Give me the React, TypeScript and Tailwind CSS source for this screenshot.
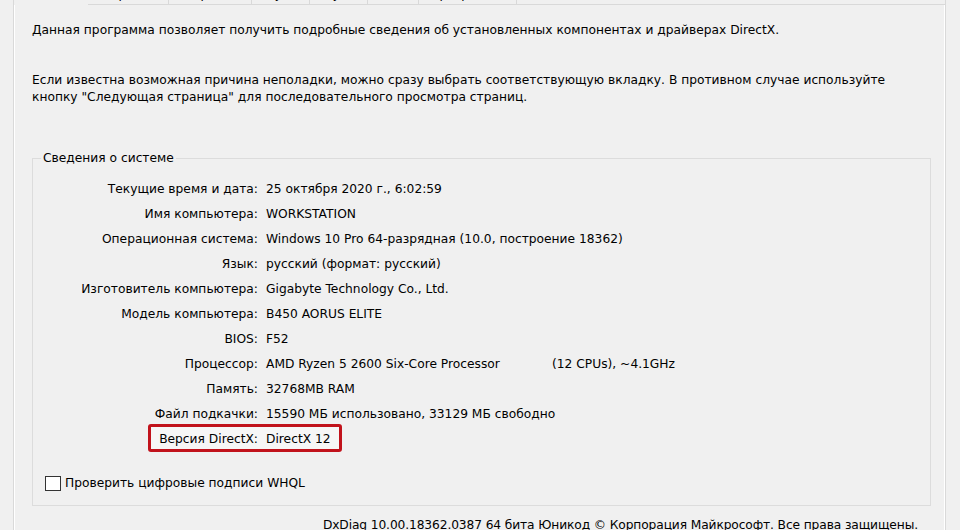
import React from "react";

const rows: [string, React.ReactNode][] = [
  ["Текущие время и дата:", "25 октября 2020 г., 6:02:59"],
  ["Имя компьютера:", "WORKSTATION"],
  ["Операционная система:", "Windows 10 Pro 64-разрядная (10.0, построение 18362)"],
  ["Язык:", "русский (формат: русский)"],
  ["Изготовитель компьютера:", "Gigabyte Technology Co., Ltd."],
  ["Модель компьютера:", "B450 AORUS ELITE"],
  ["BIOS:", "F52"],
  [
    "Процессор:",
    <span className="flex">
      <span className="w-[286px] shrink-0">AMD Ryzen 5 2600 Six-Core Processor</span>
      <span>(12 CPUs), ~4.1GHz</span>
    </span>,
  ],
  ["Память:", "32768MB RAM"],
  ["Файл подкачки:", "15590 МБ использовано, 33129 МБ свободно"],
];

const tabs: [string, string][] = [
  ["Экран 1", "w-[81px]"],
  ["Экран 2", "w-[83px]"],
  ["Звук 1", "w-[58px]"],
  ["Звук 2", "w-[58px]"],
  ["Ввод", "w-[51px]"],
  ["Программы", "w-[98px]"],
];

export default function App() {
  return (
    <div className="w-[960px] h-[530px] overflow-hidden bg-[#f0f0f0] text-black font-['DejaVu_Sans',sans-serif] text-[12.25px] leading-[17px]">
      {/* tab strip */}
      <div className="flex h-[5px] ml-[13px] w-[933px]">
        <div className="w-[75px] h-[5px] border-l border-[#d9d9d9]" />
        {tabs.map(([t, w]) => (
          <div
            key={t}
            className={`${w} h-[5px] flex items-end justify-center border-r border-b border-[#d9d9d9] bg-[#f0f0f0]`}
          >
            <span className="whitespace-nowrap mb-[1px]">{t}</span>
          </div>
        ))}
        <div className="flex-1 h-[5px] border-b border-r border-[#d9d9d9]" />
      </div>

      {/* tab page */}
      <div className="ml-[13px] w-[933px] h-[525px] border-l border-r border-[#d9d9d9] shadow-[inset_1px_0_0_#ffffff,inset_-1px_0_0_#ffffff] pl-[18px] pr-[14px] pt-[17px]">
        <p className="whitespace-nowrap">
          Данная программа позволяет получить подробные сведения об установленных компонентах и драйверах DirectX.
        </p>
        <p className="mt-[33px]">
          Если известна возможная причина неполадки, можно сразу выбрать соответствующую вкладку. В противном случае используйте
          <br />
          кнопку "Следующая страница" для последовательного просмотра страниц.
        </p>

        <fieldset className="mt-[44px] border border-[#dcdcdc] pt-[10px] pb-[13px]">
          <legend className="ml-[8px] px-[2px]">Сведения о системе</legend>
          <div className="flex flex-col">
            {rows.map(([label, value]) => (
              <div key={label} className="grid grid-cols-[225px_1fr] gap-x-[8px] h-[25px] items-center">
                <span className="text-right whitespace-nowrap">{label}</span>
                <span className="whitespace-nowrap">{value}</span>
              </div>
            ))}
            <div className="relative grid grid-cols-[225px_1fr] gap-x-[8px] h-[25px] items-center">
              <div className="absolute left-[115px] top-[-3px] w-[194px] h-[28px] border-[3px] border-[#c1121b] rounded-[3px] bg-[#f6f6f6]" />
              <span className="relative text-right whitespace-nowrap">Версия DirectX:</span>
              <span className="relative whitespace-nowrap">DirectX 12</span>
            </div>
          </div>

          <label className="mt-[23px] ml-[12px] flex items-center gap-[4px] h-[17px]">
            <span className="w-[16px] h-[15px] border border-[#333333] bg-white shrink-0" />
            <span className="whitespace-nowrap">Проверить цифровые подписи WHQL</span>
          </label>
        </fieldset>

        <p className="mt-[11px] pr-[13px] text-right whitespace-nowrap tracking-[-0.12px]">
          DxDiag 10.00.18362.0387 64 бита Юникод © Корпорация Майкрософт. Все права защищены.
        </p>
      </div>
    </div>
  );
}
